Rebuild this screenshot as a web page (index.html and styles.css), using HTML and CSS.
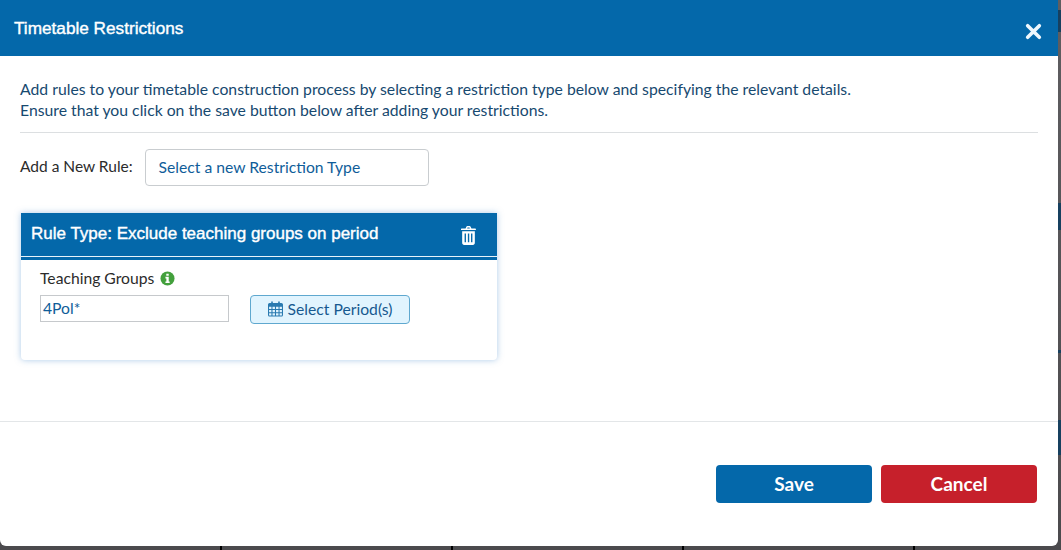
FILE: index.html
```html
<!DOCTYPE html>
<html lang="en">
<head>
<meta charset="utf-8">
<title>Timetable Restrictions</title>
<link rel="stylesheet" href="styles.css">
</head>
<body>
<div class="modal">
  <header class="modal-head">
    <h1 class="modal-title">Timetable Restrictions</h1>
    <svg class="close-icon" viewBox="0 0 16 16" width="17" height="17" aria-hidden="true"><path d="M2.5 2.5 13.5 13.5M13.5 2.5 2.5 13.5" stroke="#eef7fd" stroke-width="3.4" stroke-linecap="round" fill="none"/></svg>
  </header>
  <section class="modal-body">
    <p class="intro">Add rules to your timetable construction process by selecting a restriction type below and specifying the relevant details.<br>Ensure that you click on the save button below after adding your restrictions.</p>
    <div class="new-rule">
      <span class="new-rule-label">Add a New Rule:</span>
      <div class="type-select">Select a new Restriction Type</div>
    </div>
    <article class="rule-card">
      <div class="rule-head">
        <span class="rule-title">Rule Type: Exclude teaching groups on period</span>
        <svg class="trash-icon" viewBox="0 0 16 18" width="17" height="19" aria-hidden="true"><path fill="#fff" fill-rule="evenodd" d="M5.2 2.3 6 .6C6.2.2 6.5 0 6.9 0h2.200c.4 0 .7.2.9.6l.8 1.700h3.600c.4 0 .6.2.6.6v.9H.9v-.9c0-.4.2-.6.6-.6h3.700Zm1.500 0h2.600l-.4-.9H7.100l-.4.9ZM2 5h12v10.900c0 1.200-.8 2.100-1.800 2.100H3.800C2.800 18 2 17.100 2 15.900V5Zm2.300 2v8.500h1.300V7H4.300Zm3.100 0v8.500h1.300V7H7.400Zm3 0v8.500h1.300V7h-1.300Z"/></svg>
      </div>
      <div class="rule-body">
        <div class="field-label">Teaching Groups
          <svg class="info-icon" viewBox="0 0 16 16" width="15" height="15" aria-hidden="true"><circle cx="8" cy="8" r="7.500" fill="#43a03c"/><path fill="#fff" d="M6.700 2.800h2.600v2.200H6.700zM5.800 6.200h3.500v5h1v1.700H5.800v-1.700h1V8H5.800z"/></svg>
        </div>
        <div class="field-row">
          <div class="text-input">4Pol*</div>
          <button class="period-btn" type="button">
            <svg class="cal-icon" viewBox="0 0 14 14" width="15" height="16" aria-hidden="true"><path fill="#2a7ab0" fill-rule="evenodd" d="M3 0h1.500v1.500h5V0H11v1.500h1.500c.8 0 1.500.7 1.500 1.500v9.500c0 .8-.7 1.500-1.500 1.500h-11C.7 14 0 13.300 0 12.500V3c0-.8.7-1.500 1.500-1.500H3V0ZM1 5v2h2.200V5H1Zm3.200 0v2h2.300V5H4.200Zm3.300 0v2h2.300V5H7.500Zm3.300 0v2H13V5h-2.200ZM1 8v2h2.200V8H1Zm3.200 0v2h2.300V8H4.200Zm3.300 0v2h2.300V8H7.500Zm3.300 0v2H13V8h-2.200ZM1 11v1.500c0 .3.200.5.500.5h1.700v-2H1Zm3.200 0v2h2.300v-2H4.200Zm3.300 0v2h2.300v-2H7.500Zm3.300 0v2h1.700c.3 0 .5-.2.500-.5V11h-2.200Z"/></svg>
            Select Period(s)
          </button>
        </div>
      </div>
    </article>
  </section>
  <footer class="modal-foot">
    <button class="action action-save" type="button">Save</button>
    <button class="action action-cancel" type="button">Cancel</button>
  </footer>
</div>
</body>
</html>
```
FILE: styles.css
```css
* { box-sizing: border-box; }
html, body { margin: 0; height: 100%; }
body {
  width: 1061px;
  height: 550px;
  overflow: hidden;
  font-family: Lato, "Liberation Sans", sans-serif;
  background:
    linear-gradient(#17405f, #17405f) 1058px 10px / 3px 22px no-repeat,
    linear-gradient(#17405f, #17405f) 1058px 203px / 3px 27px no-repeat,
    linear-gradient(#17405f, #17405f) 1058px 350px / 3px 3px no-repeat,
    linear-gradient(#17405f, #17405f) 1058px 420px / 3px 35px no-repeat,
    linear-gradient(90deg, transparent 220px, #000 220px, #000 222px, transparent 222px) 0 0 / 231px 100% repeat-x,
    linear-gradient(#5f5e61, #4b4a4d);
}
.modal {
  width: 1058px;
  height: 546px;
  background: #fff;
  border-radius: 0 0 6px 6px;
  display: flex;
  flex-direction: column;
  overflow: hidden;
}
.modal-head {
  height: 56px;
  flex: none;
  background: #0468aa;
  display: flex;
  justify-content: space-between;
  padding: 0 16px 0 14px;
}
.modal-title {
  margin: 0;
  font: 400 17.200px/57px "Liberation Sans", Arial, sans-serif;
  color: #fff;
  -webkit-text-stroke: 0.4px #fff;
}
.close-icon { margin-top: 23px; }
.modal-body {
  height: 366px;
  flex: none;
  padding: 22px 20px 0;
  border-bottom: 1px solid #e3e6e8;
}
.intro {
  margin: 0;
  padding-bottom: 12px;
  border-bottom: 1px solid #dcdfe1;
  font-size: 15.750px;
  line-height: 21px;
  color: #17496f;
}
.new-rule {
  margin-top: 16px;
  display: flex;
  align-items: flex-start;
  gap: 12px;
}
.new-rule-label { font-size: 15.500px; line-height: 34px; color: #2b2b2b; }
.type-select {
  width: 284px;
  height: 37px;
  padding-left: 13px;
  border: 1px solid #c9cdd0;
  border-radius: 4px;
  font-size: 15.700px;
  line-height: 35px;
  color: #0f5d99;
}
.rule-card {
  margin-top: 27px;
  width: 476px;
  height: 147px;
  margin-left: 1px;
  background: #fff;
  border-radius: 0 0 4px 4px;
  box-shadow: 0 0 6px rgba(90, 150, 210, .5);
}
.rule-head {
  height: 47px;
  background: #0468aa;
  border-bottom: 3px solid #0468aa;
  box-shadow: inset 0 -1px 0 #e6f2fa;
  display: flex;
  justify-content: space-between;
  align-items: center;
  padding: 0 20px 0 10px;
}
.rule-title {
  font: 400 17px "Liberation Sans", Arial, sans-serif;
  color: #fff;
  -webkit-text-stroke: 0.4px #fff;
  position: relative;
  top: -1px;
}
.rule-body { padding: 7px 20px 0 19px; }
.field-label {
  display: flex;
  align-items: center;
  gap: 6px;
  font-size: 15.700px;
  line-height: 22px;
  color: #2b2b2b;
}
.field-row {
  margin-top: 6px;
  display: flex;
  align-items: flex-start;
  gap: 21px;
}
.text-input {
  width: 189px;
  height: 27px;
  padding-left: 2px;
  border: 1px solid #c6c9cc;
  font-size: 15.700px;
  line-height: 25px;
  color: #0f5d99;
}
.period-btn {
  width: 160px;
  height: 29px;
  padding: 0 0 2px;
  background: #e1f4fe;
  border: 1px solid #5fa8cf;
  border-radius: 4px;
  display: flex;
  align-items: center;
  justify-content: center;
  gap: 5px;
  font: 400 15.700px Lato, sans-serif;
  color: #17598f;
}
.modal-foot {
  flex: 1;
  display: flex;
  justify-content: flex-end;
  gap: 9px;
  padding: 43px 21px 0 0;
}
.action {
  width: 156px;
  height: 38px;
  padding: 0 0 2px;
  border: 0;
  border-radius: 4px;
  color: #fff;
  font: 700 19px Lato, sans-serif;
}
.action-save { background: #0468aa; }
.action-cancel { background: #c6202b; }
```
